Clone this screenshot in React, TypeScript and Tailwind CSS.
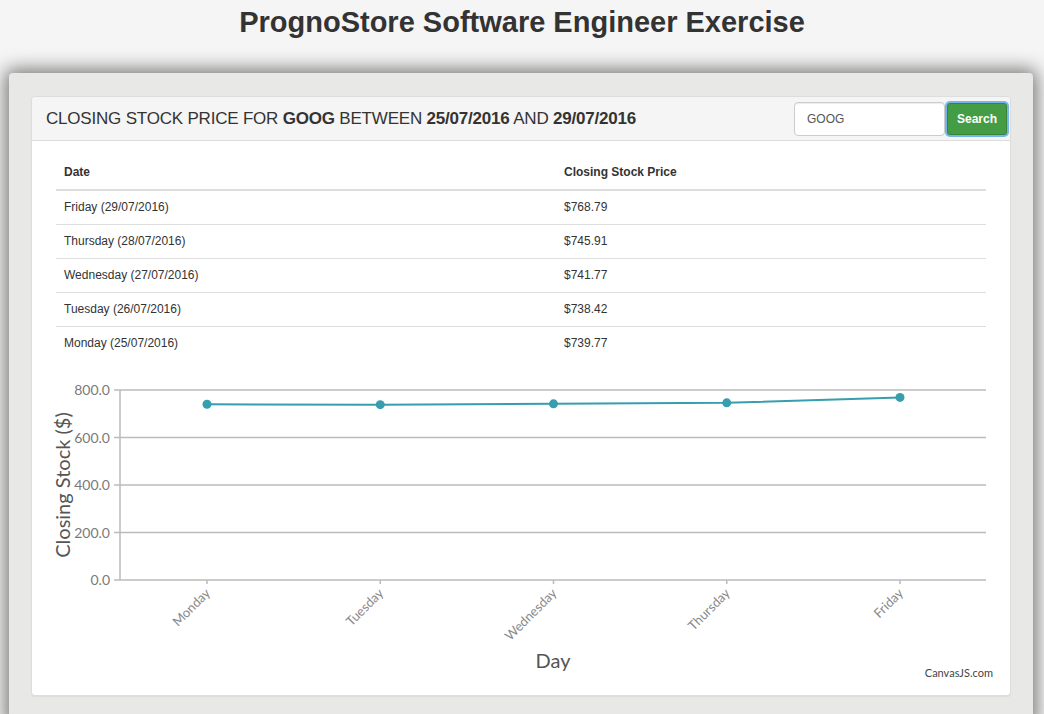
import React from 'react';

const rows = [
  { date: 'Friday (29/07/2016)', price: '$768.79' },
  { date: 'Thursday (28/07/2016)', price: '$745.91' },
  { date: 'Wednesday (27/07/2016)', price: '$741.77' },
  { date: 'Tuesday (26/07/2016)', price: '$738.42' },
  { date: 'Monday (25/07/2016)', price: '$739.77' },
];

const points = [
  { day: 'Monday', value: 739.77 },
  { day: 'Tuesday', value: 738.42 },
  { day: 'Wednesday', value: 741.77 },
  { day: 'Thursday', value: 745.91 },
  { day: 'Friday', value: 768.79 },
];

const plotLeft = 88;
const plotRight = 954;
const plotTop = 30;
const plotBottom = 220;
const xFor = (i: number) => 175 + i * 173.25;
const yFor = (v: number) => plotBottom - (v / 800) * (plotBottom - plotTop);

const StockChart: React.FC = () => {
  const ticks = [0, 200, 400, 600, 800];
  const line = points.map((p, i) => `${xFor(i)},${yFor(p.value)}`).join(' ');
  return (
    <svg width="978" height="335" className="block" style={{ fontFamily: 'Lato, "Open Sans", sans-serif' }}>
      {/* grid + y labels */}
      {ticks.map((t) => {
        const y = yFor(t);
        return (
          <g key={t}>
            <line x1={plotLeft} x2={plotRight} y1={y} y2={y} stroke="#bbbbbb" strokeWidth="1.5" />
            <line x1={plotLeft - 6} x2={plotLeft} y1={y} y2={y} stroke="#bbbbbb" strokeWidth="1.5" />
            <text x={78} y={y + 5} textAnchor="end" fontSize="14" fill="#7a7a7a">
              {t.toFixed(1)}
            </text>
          </g>
        );
      })}
      <line x1={plotLeft} x2={plotLeft} y1={plotTop} y2={plotBottom} stroke="#bbbbbb" strokeWidth="1.5" />

      {/* x ticks + labels */}
      {points.map((p, i) => {
        const x = xFor(i);
        return (
          <g key={p.day}>
            <line x1={x} x2={x} y1={plotBottom} y2={plotBottom + 4} stroke="#bbbbbb" strokeWidth="1.5" />
            <text
              x={x + 4}
              y={plotBottom + 14}
              textAnchor="end"
              fontSize="13"
              fill="#888888"
              transform={`rotate(-45 ${x + 4} ${plotBottom + 14})`}
            >
              {p.day}
            </text>
          </g>
        );
      })}

      {/* series */}
      <polyline points={line} fill="none" stroke="#369ead" strokeWidth="2" />
      {points.map((p, i) => (
        <circle key={p.day} cx={xFor(i)} cy={yFor(p.value)} r="4.5" fill="#369ead" />
      ))}

      {/* titles */}
      <text x={30} y={125} textAnchor="middle" fontSize="20" fill="#555555" transform="rotate(-90 30 125)" dominantBaseline="central">
        Closing Stock ($)
      </text>
      <text x={521} y={308} textAnchor="middle" fontSize="20" fill="#555555">
        Day
      </text>
      <text x={961} y={317} textAnchor="end" fontSize="11" fill="#444444">
        CanvasJS.com
      </text>
    </svg>
  );
};

const App: React.FC = () => {
  return (
    <div className="h-[714px] overflow-hidden bg-[#f5f5f5] text-[#333]" style={{ fontFamily: '"Liberation Sans", Arial, sans-serif' }}>
      <h1 className="pt-[6px] text-center text-[29px] font-bold leading-[32px] text-[#333]">
        PrognoStore Software Engineer Exercise
      </h1>

      {/* Well */}
      <div className="ml-[9px] mr-[11px] mt-[35px] rounded-[4px] bg-[#e8e8e6] px-[22px] pt-[23px] pb-[30px] shadow-[0_0_18px_4px_rgba(0,0,0,0.5)]">
        {/* Panel */}
        <div className="rounded-[4px] border border-[#dddddd] bg-white shadow-[0_1px_1px_rgba(0,0,0,0.05)]">
          {/* Header */}
          <div className="flex h-[44px] items-center justify-between rounded-t-[4px] border-b border-[#dddddd] bg-[#f5f5f5] pl-[14px] pr-[3px]">
            <div className="text-[17px] tracking-[-0.2px] text-[#333]">
              CLOSING STOCK PRICE FOR <b>GOOG</b> BETWEEN <b>25/07/2016</b> AND <b>29/07/2016</b>
            </div>
            <div className="flex items-center">
              <input
                readOnly
                value="GOOG"
                className="h-[34px] w-[151px] rounded-[4px] border border-[#cccccc] bg-white px-[12px] text-[12px] text-[#555] outline-none shadow-[inset_0_1px_1px_rgba(0,0,0,0.075)]"
              />
              <button className="ml-[2px] h-[32px] w-[60px] rounded-[3px] border border-[#398439] bg-[#449d44] text-[12px] font-bold text-white shadow-[0_0_0_2px_rgba(102,175,233,0.9)]">
                Search
              </button>
            </div>
          </div>

          {/* Body */}
          <div className="px-[24px] pt-[15px]">
            <table className="w-full border-collapse text-[12px] leading-[17px]">
              <thead>
                <tr className="border-b-2 border-[#dddddd]">
                  <th className="w-[500px] px-[8px] py-[8px] text-left font-bold">Date</th>
                  <th className="px-[8px] py-[8px] text-left font-bold">Closing Stock Price</th>
                </tr>
              </thead>
              <tbody>
                {rows.map((r, i) => (
                  <tr key={r.date} className={i === 0 ? '' : 'border-t border-[#dddddd]'}>
                    <td className="px-[8px] py-[8px]">{r.date}</td>
                    <td className="px-[8px] py-[8px]">{r.price}</td>
                  </tr>
                ))}
              </tbody>
            </table>
          </div>
          <StockChart />
        </div>
      </div>
    </div>
  );
};

export default App;
